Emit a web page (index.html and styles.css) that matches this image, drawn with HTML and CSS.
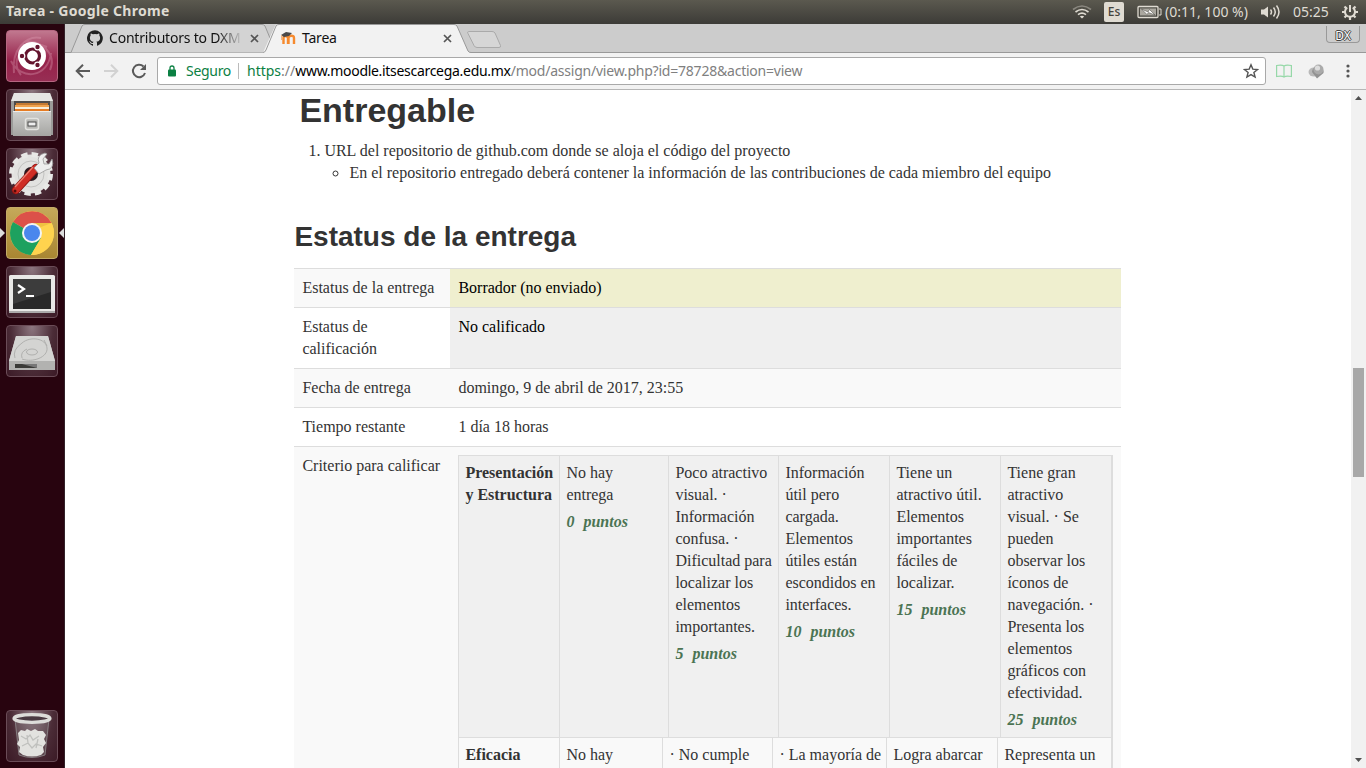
FILE: index.html
```html
<!DOCTYPE html>
<html lang="es">
<head>
<meta charset="utf-8">
<title>Tarea</title>
<link rel="stylesheet" href="styles.css">
</head>
<body>
<div class="desktop">
<header class="panel">
  <span class="panel-title">Tarea - Google Chrome</span>
  <div class="indicators">
    <svg class="wifi" width="20" height="16" viewBox="0 0 20 16" fill="none" stroke="#dfdbd2" stroke-width="1.600"><path d="M1 5.500Q10-1.500 19 5.500" stroke="#8a877f"/><path d="M3.500 8Q10 3 16.500 8"/><path d="M6 10.700Q10 7.500 14 10.700"/><path d="M7.800 12.500Q10 10.800 12.200 12.500L10 14.500z" fill="#dfdbd2" stroke="none"/></svg>
    <span class="lang">Es</span>
    <svg class="battery" width="25" height="14" viewBox="0 0 25 14"><rect x="1" y="1.500" width="20" height="11" rx="1" fill="none" stroke="#dfdbd2" stroke-width="1.300"/><path d="M22 4h2v6h-2" fill="none" stroke="#dfdbd2"/><rect x="3" y="3.500" width="16" height="7" fill="#aaa79f"/><path d="M4.500 4l6.500 3 1.500-2.500 5.500 5.500-6.500-2.500-1.500 2z" fill="#fff" stroke="#45433d" stroke-width=".5"/></svg>
    <span class="bat-text">(0:11, 100 %)</span>
    <svg class="volume" width="22" height="16" viewBox="0 0 22 16" fill="none" stroke="#dfdbd2" stroke-width="1.500"><path d="M1 5.500h3l4-3v11l-4-3H1z" fill="#dfdbd2" stroke="none"/><path d="M10.500 5.500q2 2.500 0 5"/><path d="M13.500 3.500q3.500 4.500 0 9"/><path d="M16.500 1.500q5 6.500 0 13"/></svg>
    <span class="clock">05:25</span>
    <svg class="gear" width="18" height="18" viewBox="0 0 18 18" fill="none" stroke="#dfdbd2"><path d="M6.200 4.600a5 5 0 1 0 5.600 0" stroke-width="2"/><path d="M9 2v7" stroke-width="2"/><path d="M3.500 3.500l2 2M14.500 3.500l-2 2M1 9h3M14 9h3M3.500 14.500l2-2M14.500 14.500l-2-2M9 14v3" stroke-width="2.200"/></svg>
  </div>
</header>
<div class="workspace">
<nav class="launcher">
  <div class="tile ubuntu"><svg viewBox="0 0 52 52"><g fill="none" stroke="#e0a3b8" stroke-opacity=".35" stroke-width="2"><path d="M8 43C5 20 20 5 35 8M44 40C51 24 35 9 18 12M5 31c10 20 37 17 40-8M15 45C2 29 20 8 41 17"/></g><circle cx="26" cy="26" r="14" fill="#fff"/><circle cx="26.500" cy="26" r="7" fill="none" stroke="#64142e" stroke-width="3.200"/><g fill="#64142e" stroke="#fff" stroke-width="1.200"><circle cx="16" cy="26" r="2.800"/><circle cx="31.500" cy="17" r="2.800"/><circle cx="31.500" cy="35" r="2.800"/></g></svg></div>
  <div class="tile"><svg viewBox="0 0 52 52"><defs><linearGradient id="drawer" x2="0" y2="1"><stop stop-color="#cfcfcd"/><stop offset="1" stop-color="#a5a5a2"/></linearGradient></defs><path d="M8 4h36l3 8v34H5V12z" fill="#9b9b99"/><path d="M8 4h36l3 8H5z" fill="#e6e6e4"/><path d="M8 12h36v10H8z" fill="#4f4c4a"/><path d="M10 14h32v3H10z" fill="#c47a33"/><path d="M9 16h34v2H9z" fill="#f0a24e"/><path d="M9 18h34v2H9z" fill="#f8eedb"/><path d="M9 20h34v2H9z" fill="#e67c24"/><path d="M7 22h38v25H7z" fill="url(#drawer)"/><path d="M7 22h38v1H7z" fill="#ededea"/><rect x="19.500" y="29.500" width="13" height="11" rx="2" fill="#b8b8b5" stroke="#e3e3e0" stroke-width="1.500"/><rect x="22" y="33" width="8" height="4" fill="#eee" stroke="#4a4a4a"/></svg></div>
  <div class="tile"><svg viewBox="0 0 52 52"><circle cx="25" cy="26" r="12.500" fill="none" stroke="#e2e2e0" stroke-width="14"/><circle cx="25" cy="26" r="19.500" fill="none" stroke="#e8e8e6" stroke-width="5" stroke-dasharray="6.200 4.010"/><circle cx="25" cy="26" r="13" fill="none" stroke="#c2c2c0"/><circle cx="25" cy="26" r="7" fill="#2c1a20"/><path d="M10 42L30 20" stroke="#8f1612" stroke-width="8.500" stroke-linecap="round"/><path d="M10 42L30 20" stroke="#cf2d25" stroke-width="6.500" stroke-linecap="round"/><path d="M9 39L27 19" stroke="#ee7e70" stroke-width="1.300"/><path d="M28 20l5-5q-3-8 6-10l2 1-4 5 1 5 5 0 3-5q3 10-6 11l-7 4z" fill="#eee" stroke="#999" stroke-width=".8"/><circle cx="9" cy="43" r="1.500" fill="#560b09"/></svg></div>
  <div class="tile active"><svg viewBox="0 0 52 52"><circle cx="26" cy="26" r="22" fill="#ffd34e"/><path d="M26 26L7 15A22 22 0 0 1 45.500 16z" fill="#dc5149"/><path d="M7 15a22 22 0 0 0 18 33l10-17-9-5z" fill="#1da15f"/><path d="M45.500 16H26l9 15-10 17A22 22 0 0 0 45.500 16z" fill="#ffd34e"/><path d="M26 16h19.500L35 20z" fill="#dfae35" opacity=".5"/><circle cx="26" cy="26" r="10" fill="#f3f4f4"/><circle cx="26" cy="26" r="8" fill="#4a87ed"/></svg></div>
  <div class="tile"><svg viewBox="0 0 52 52"><rect x="3" y="9" width="46" height="38" rx="1.500" fill="#e9e9e7"/><path d="M3 45h46v2H3z" fill="#aaa"/><rect x="7" y="13" width="38" height="30" fill="#292929"/><path d="M7 13h38v13L7 38z" fill="#3c3c3c"/><path d="M12 19l6 4-6 4" fill="none" stroke="#fff" stroke-width="2.200"/><path d="M20 30h8" stroke="#fff" stroke-width="2"/></svg></div>
  <div class="tile"><svg viewBox="0 0 52 52"><path d="M10 11h32l7 25v9H3v-9z" fill="#ccc"/><path d="M10 11h32l7 25H3z" fill="#d4d4d2"/><path d="M3 36h46v9H3z" fill="#b2b2b0"/><path d="M9 39h22v4H9z" fill="#3b3b38"/><path d="M16 39h15v4z" fill="#777"/><g fill="none" stroke="#b0b0ae" stroke-width="1"><path d="M9 33q-3-8 7-15c8-7 24-5 25 5 1 9-14 15-25 11"/><ellipse cx="26" cy="27" rx="5.500" ry="3"/><path d="M16 33q-2-6 5-9M38 15l3 6"/></g></svg></div>
  <div class="tile trash"><svg viewBox="0 0 52 52"><path d="M9 9l4 36q13 5 26 0l4-36z" fill="#999" fill-opacity=".25" stroke="#999" stroke-width=".7"/><path d="M12 23l3-3 4 1 2-2 4 2 4-2 3 2 5 0 3 4-2 4 2 4-3 4 1 5-3 3q-9 3-18 0l-4-3 1-5-3-3 2-4z" fill="#e2e2df"/><path d="M15 26l5 3 4-4 3 5 6-4M16 36l6-3 4 5 4-4 6 2M21 25l1 8M32 29l-2 9" fill="none" stroke="#bfc0bd" stroke-width="1.300"/><ellipse cx="26" cy="8.500" rx="18" ry="3.800" fill="#4a3a42" stroke="#dcdcd9" stroke-width="3.200"/></svg></div>
</nav>
<main class="browser">
  <div class="tabstrip">
    <svg class="tab-shapes" width="445" height="29" viewBox="65 24 445 29"><path d="M65 52.500H71L82 26Q83 24.500 85 24.500H262Q264 24.500 265 26L276 52.500" fill="#d3d3d3" stroke="#999"/><path d="M263 52.500L275 26Q276 24.500 278 24.500H454Q456 24.500 457 26L468 51Q469 52.500 471 52.500V53H263z" fill="#f2f2f2"/><path d="M263 52.500Q265 52.500 266 50L276 26Q277 24.500 279 24.500H454Q456 24.500 457 26L468 51Q469 52.500 471 52.500H510" fill="none" stroke="#999"/><path d="M468.500 31.500H492Q494 31.500 495 33L500.500 45.500Q501 47.500 499 47.500H477Q475 47.500 474 45.500L468 33.500Q467 31.500 468.500 31.500z" fill="#d6d6d6" stroke="#aaa"/></svg>
    <div class="tab first">
      <svg width="16" height="16" viewBox="0 0 16 16"><path fill="#222" d="M8 .2a8 8 0 0 0-2.500 15.600c.4.100.5-.2.500-.4v-1.500c-2.200.5-2.700-.9-2.700-.9-.4-.9-.9-1.200-.9-1.200-.7-.5.100-.5.100-.5.800.1 1.200.8 1.200.8.700 1.300 1.900.9 2.300.7.100-.5.300-.9.500-1.100-1.800-.2-3.600-.9-3.600-4 0-.9.300-1.600.8-2.100-.1-.2-.4-1 .1-2.100 0 0 .7-.2 2.200.8a7.500 7.500 0 0 1 4 0c1.500-1 2.200-.8 2.200-.8.400 1.100.2 1.900.1 2.100.5.600.8 1.300.8 2.100 0 3.100-1.900 3.700-3.700 3.900.3.300.6.800.6 1.500v2.200c0 .2.100.5.600.4A8 8 0 0 0 8 .2z"/></svg>
      <span class="tab-title fade">Contributors to DXM</span>
      <svg class="close" width="9" height="9" viewBox="0 0 9 9"><path d="M1 1l7 7M8 1L1 8" stroke="#555" stroke-width="1.700"/></svg>
    </div>
    <div class="tab second">
      <svg width="16" height="16" viewBox="0 0 16 16"><path d="M3.500 14V8q0-2 2-2t2.500 2v6M8.500 14V8q0-2.300 2.800-2.300T14 8v6" fill="none" stroke="#f68a2e" stroke-width="2.400"/><path d="M1 5l5-3 6 1-3 3-5 1z" fill="#494949"/><path d="M1.500 5v5" stroke="#e8b58a"/></svg>
      <span class="tab-title">Tarea</span>
      <svg class="close" width="9" height="9" viewBox="0 0 9 9"><path d="M1 1l7 7M8 1L1 8" stroke="#555" stroke-width="1.700"/></svg>
    </div>
    <div class="user">DX</div>
  </div>
  <div class="toolbar">
    <svg class="nav-icon" width="16" height="16" viewBox="0 0 16 16" fill="none" stroke="#5a5a5a" stroke-width="2"><path d="M15 8H2.500M8 1.700L1.700 8 8 14.300"/></svg>
    <svg class="nav-icon" width="16" height="16" viewBox="0 0 16 16" fill="none" stroke="#d2d2d2" stroke-width="2"><path d="M1 8h12.500M8 1.700L14.300 8 8 14.300"/></svg>
    <svg class="nav-icon" width="16" height="16" viewBox="0 0 16 16"><path d="M12.500 3.500A6.200 6.200 0 1 0 14 10" fill="none" stroke="#5a5a5a" stroke-width="2"/><path d="M15 1v6H9z" fill="#5a5a5a"/></svg>
    <div class="omnibox">
      <svg class="lock" width="8" height="12" viewBox="0 0 8 12"><rect y="4.500" width="8" height="7" rx="1" fill="#0b8043"/><path d="M2 5V3q0-2 2-2t2 2v2" fill="none" stroke="#0b8043" stroke-width="1.300"/></svg>
      <span class="secure">Seguro</span>
      <span class="url"><span class="scheme">https</span>://<span class="host">www.moodle.itsescarcega.edu.mx</span><span class="path">/mod/assign/view.php?id=78728&amp;action=view</span></span>
      <svg class="star" width="16" height="16" viewBox="0 0 16 16"><path d="M8 1.800l1.800 4.300 4.700.4-3.600 3 1.200 4.600L8 11.600l-4.100 2.500 1.200-4.600-3.600-3 4.700-.4z" fill="none" stroke="#555" stroke-width="1.400"/></svg>
    </div>
    <svg class="book" width="16" height="14" viewBox="0 0 16 14" fill="none" stroke="#96d8a8" stroke-width="1.200"><path d="M.6 1.500Q6 .5 8 2 10 .5 15.400 1.500v11Q10 11.500 8 13 6 11.500 .6 12.500zM8 2V13"/></svg>
    <svg class="globe" width="17" height="15" viewBox="0 0 17 15"><ellipse cx="6" cy="8" rx="5.500" ry="4.500" fill="#b9b9b9"/><path d="M4 8a5.800 5.800 0 1 1 11.500 1L9 14.500z" fill="#929292"/><circle cx="10.500" cy="5.500" r="5" fill="#aaa"/><circle cx="9.500" cy="4" r="2.600" fill="#ddd"/></svg>
    <svg class="menu" width="4" height="14" viewBox="0 0 4 14" fill="#555"><circle cx="2" cy="2" r="1.600"/><circle cx="2" cy="7" r="1.600"/><circle cx="2" cy="12" r="1.600"/></svg>
  </div>
  <div class="viewport">
    <article class="page">
      <h1>Entregable</h1>
      <ol><li>URL del repositorio de github.com donde se aloja el código del proyecto
        <ul><li>En el repositorio entregado deberá contener la información de las contribuciones de cada miembro del equipo</li></ul></li></ol>
      <h2>Estatus de la entrega</h2>
      <div class="status">
        <div class="row odd"><div class="key">Estatus de la entrega</div><div class="val draft">Borrador (no enviado)</div></div>
        <div class="row"><div class="key">Estatus de<br>calificación</div><div class="val ungraded">No calificado</div></div>
        <div class="row odd"><div class="key">Fecha de entrega</div><div class="val">domingo, 9 de abril de 2017, 23:55</div></div>
        <div class="row"><div class="key">Tiempo restante</div><div class="val">1 día 18 horas</div></div>
        <div class="row odd"><div class="key">Criterio para calificar</div><div class="val">
          <div class="rubric">
            <div class="criterion first-criterion">
              <div class="name">Presentación<br>y Estructura</div>
              <div class="level">No hay<br>entrega<p class="score">0 <span>puntos</span></p></div>
              <div class="level">Poco atractivo<br>visual. ·<br>Información<br>confusa. ·<br>Dificultad para<br>localizar los<br>elementos<br>importantes.<p class="score">5 <span>puntos</span></p></div>
              <div class="level">Información<br>útil pero<br>cargada.<br>Elementos<br>útiles están<br>escondidos en<br>interfaces.<p class="score">10 <span>puntos</span></p></div>
              <div class="level">Tiene un<br>atractivo útil.<br>Elementos<br>importantes<br>fáciles de<br>localizar.<p class="score">15 <span>puntos</span></p></div>
              <div class="level">Tiene gran<br>atractivo<br>visual. · Se<br>pueden<br>observar los<br>íconos de<br>navegación. ·<br>Presenta los<br>elementos<br>gráficos con<br>efectividad.<p class="score">25 <span>puntos</span></p></div>
            </div>
            <div class="criterion second-criterion">
              <div class="name">Eficacia</div>
              <div class="level">No hay</div>
              <div class="level">· No cumple</div>
              <div class="level">· La mayoría de</div>
              <div class="level">Logra abarcar</div>
              <div class="level">Representa un</div>
            </div>
          </div>
        </div></div>
      </div>
    </article>
    <div class="scrollbar">
      <svg width="7" height="4" viewBox="0 0 7 4"><path d="M0 4L3.500 0 7 4z" fill="#505050"/></svg>
      <div class="thumb"></div>
      <svg class="down" width="7" height="4" viewBox="0 0 7 4"><path d="M0 0h7L3.500 4z" fill="#505050"/></svg>
    </div>
  </div>
</main>
</div>
</div>
</body>
</html>
```
FILE: styles.css
```css
* { box-sizing: border-box; }
body { margin: 0; overflow: hidden; }
svg { display: block; flex: none; }
.desktop { width: 1366px; height: 768px; display: flex; flex-direction: column; font-family: "Noto Sans", sans-serif; font-size: 14px; white-space: nowrap; }
.panel { height: 24px; flex: none; display: flex; align-items: center; justify-content: space-between; padding: 0 7px 0 6px; background: linear-gradient(#5b594f, #3c3b37); color: #dfdbd2; }
.panel-title { font-size: 14px; font-weight: 700; letter-spacing: .3px; line-height: 22px; margin-top: -2px; }
.indicators { display: flex; align-items: center; height: 24px; }
.lang { width: 20px; height: 20px; margin-left: 12px; border-radius: 2px; background: #dfdbd2; color: #45433d; font-size: 12px; font-weight: 500; line-height: 20px; text-align: center; }
.battery { margin-left: 13px; }
.bat-text { width: 84px; margin: -2px 0 0 3px; }
.volume { margin-left: 11px; }
.clock { width: 36px; margin: -2px 0 0 11px; }
.gear { margin-left: 12px; }
.workspace { flex: 1; min-height: 0; display: flex; }
.launcher { width: 65px; flex: none; display: flex; flex-direction: column; gap: 7px; padding: 6px 0 6px 6px; background: #28040f; border-right: 1px solid #33222a; }
.tile { width: 52px; height: 52px; flex: none; border-radius: 4px; border: 1px solid #6a4c57; background: radial-gradient(ellipse at 50% 0, #8d7780, #4b2c37 60%, #3b1a26); }
.tile svg { width: 52px; height: 52px; margin: -1px; }
.ubuntu { background: linear-gradient(#c1788f, #96214a 60%, #972e54); border-color: #b66781; }
.active { position: relative; background: linear-gradient(#c5a95a, #a98632); border-color: #c3ab68; }
.active::before, .active::after { content: ""; position: absolute; top: 20px; border: 5px solid transparent; }
.active::before { left: -7px; border-left-color: #ddd; border-right: 0; }
.active::after { right: -7px; border-right-color: #ddd; border-left: 0; }
.trash { margin-top: auto; }
.browser { flex: 1; min-width: 0; display: flex; flex-direction: column; }
.tabstrip { height: 29px; flex: none; position: relative; display: flex; background: #ccc; border-bottom: 1px solid #999; color: #111; }
.tab-shapes { position: absolute; left: 0; top: 0; }
.tab { position: relative; display: flex; align-items: center; height: 28px; }
.first { width: 194px; padding-left: 22px; }
.second { width: 194px; padding-left: 21px; }
.tab-title { width: 133px; margin: -1px 0 0 6px; letter-spacing: -.2px; }
.fade { -webkit-mask-image: linear-gradient(to right, #000 108px, transparent 134px); mask-image: linear-gradient(to right, #000 108px, transparent 134px); }
.close { margin-left: 8px; }
.user { width: 34px; height: 17px; margin: 2px 6px 0 auto; border: 1px solid #999; border-top: 0; border-radius: 0 0 4px 4px; font-size: 12px; line-height: 19px; text-align: center; color: #fff; text-shadow: 1px 0 #444, -1px 0 #444, 0 1px #444, 0 -1px #444; }
.toolbar { height: 37px; flex: none; display: flex; align-items: center; padding: 0 16px 0 10px; background: #f2f2f2; border-bottom: 1px solid #b6b6b6; }
.nav-icon { margin-right: 12px; }
.omnibox { width: 1109px; height: 28px; margin-left: -2px; display: flex; align-items: center; padding: 0 6px 0 10px; border: 1px solid #a9a9a9; border-radius: 3px; background: #fff; }
.secure { width: 45px; margin: -2px 0 0 10px; color: #0b8043; letter-spacing: -.3px; }
.url { margin: -1px 0 0 7px; padding-left: 8px; border-left: 1px solid #bbb; line-height: 16px; color: #808080; }
.scheme { color: #0b8043; }
.host { color: #000; letter-spacing: -.3px; }
.path { letter-spacing: -.22px; }
.star { margin-left: auto; }
.book { margin-left: 10px; }
.globe { margin-left: 16px; }
.menu { margin-left: auto; }
.viewport { flex: 1; min-height: 0; display: flex; background: #fff; overflow: hidden; }
.page { flex: 1; padding-left: 229.4px; font: 16px/22px "Liberation Serif", serif; color: #333; }
h1, h2 { font-family: "Liberation Sans", sans-serif; font-weight: 700; line-height: 40px; margin: 0; }
h1 { font-size: 34px; padding-left: 5px; }
h2 { font-size: 28px; margin: 33px 0 11px; }
ol { margin: 10px 0 0 5px; padding-left: 25px; }
ul { margin: 0; padding-left: 25px; list-style: circle; }
.status { width: 827px; }
.row { display: flex; border-top: 1px solid #ddd; }
.odd { background: #f9f9f9; }
.key { width: 156px; padding: 8px; }
.val { flex: 1; padding: 8px; }
.draft { background: #efefcf; color: #000; }
.ungraded { background: #efefef; color: #000; }
.rubric { border: 1px solid #ddd; border-right-width: 2px; }
.criterion { display: grid; }
.first-criterion { grid-template-columns: 100px 109px 110px 111px 111px 1fr; background: #f0f0f0; height: 281px; }
.second-criterion { grid-template-columns: 100px 103px 110px 114px 111px 1fr; border-top: 1px solid #ddd; height: 60px; }
.name, .level { padding: 6px; }
.name { font-weight: 700; }
.level { border-left: 1px solid #ddd; }
.score { margin: 5px 0 0; font-weight: 700; font-style: italic; color: #4b7453; }
.score span { margin-left: 5px; }
.scrollbar { width: 15px; flex: none; display: flex; flex-direction: column; align-items: center; padding: 6px 1px 6px 0; background: #f1f1f1; }
.thumb { width: 11px; height: 109px; margin-top: 268px; background: #a8a8a8; }
.down { margin-top: auto; }
```
